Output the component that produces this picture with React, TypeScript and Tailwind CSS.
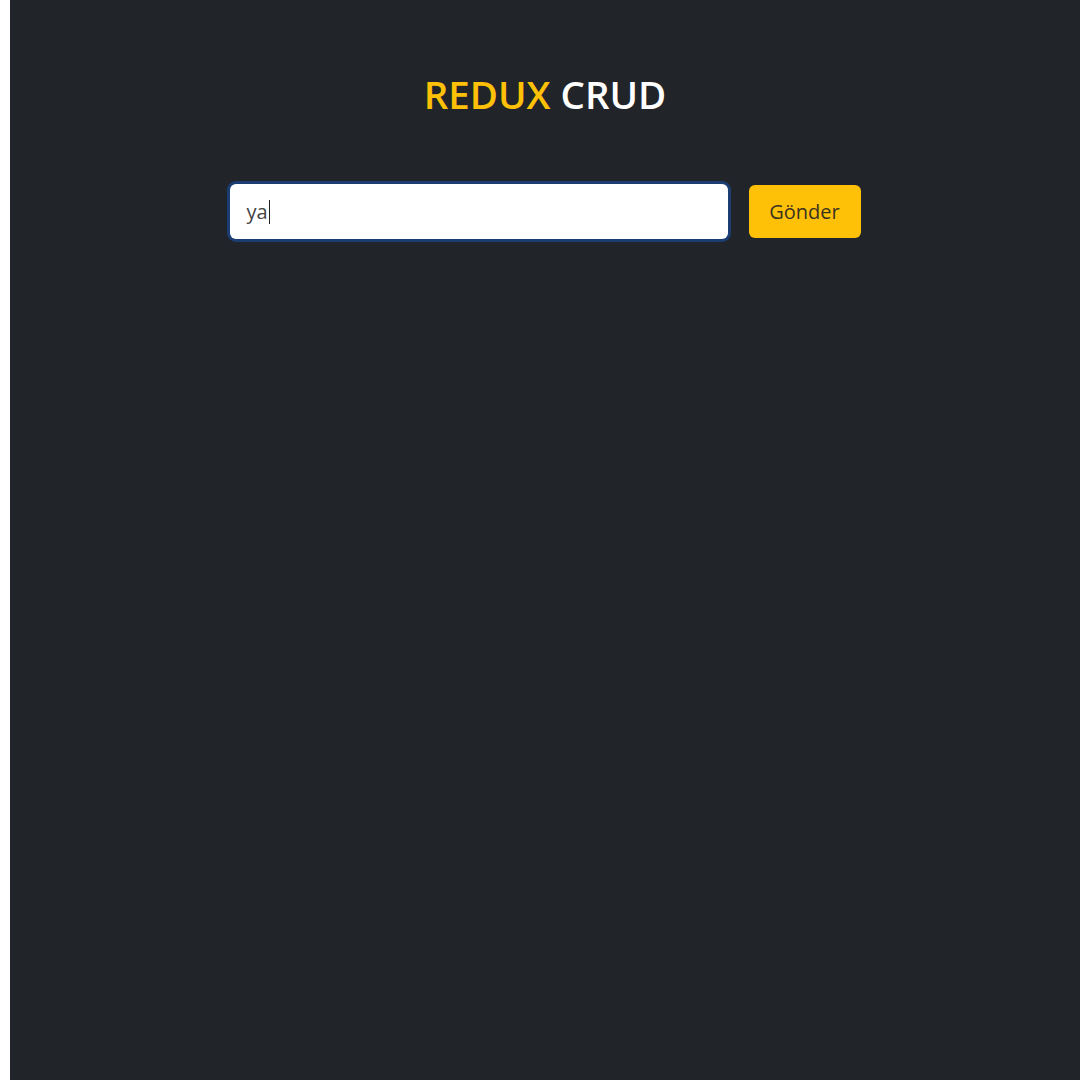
export default function App() {
  return (
    <div className="flex min-h-[1080px] w-full bg-white" style={{ fontFamily: '"Open Sans", "Noto Sans", sans-serif' }}>
      <div className="w-[10px] shrink-0 bg-white" />
      <main className="flex-1 bg-[#212529] pt-[68px]">
        <h1 className="text-center text-[38.5px] font-semibold leading-[52px]">
          <span className="text-[#ffc107]">REDUX</span> <span className="text-white">CRUD</span>
        </h1>

        <form className="mt-[64px] flex items-center justify-center gap-[21px]">
          <div className="flex h-[55px] w-[498px] items-center rounded-[6px] bg-white pl-[17px] ring-[3px] ring-[#1b3d72]">
            <span className="text-[20px] text-[#444]">ya</span>
            <span className="ml-[1px] h-[24px] w-[1px] bg-[#222]" />
          </div>
          <button
            type="button"
            className="h-[53px] w-[112px] rounded-[6px] bg-[#ffc107] text-[20px] text-[#3a3320]"
          >
            Gönder
          </button>
        </form>
      </main>
    </div>
  );
}
